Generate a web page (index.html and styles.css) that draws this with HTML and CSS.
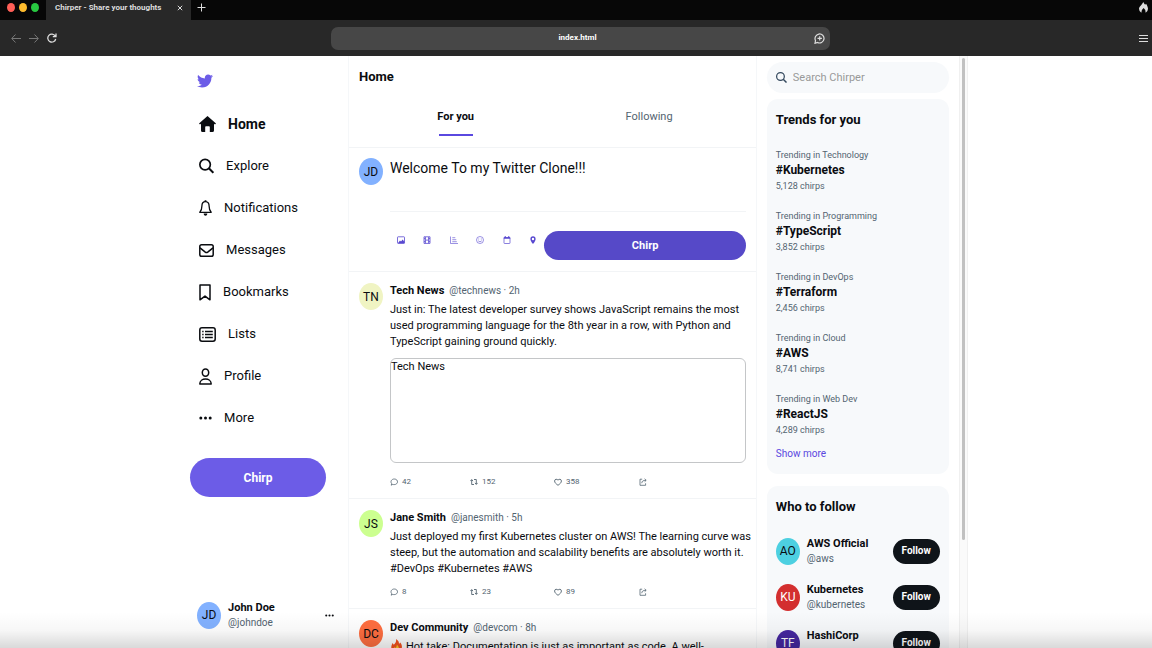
FILE: index.html
```html
<!DOCTYPE html>
<html lang="en">

<head>
  <meta charset="utf-8">
  <title>Chirper - Share your thoughts</title>
  <link rel="stylesheet" href="styles.css">
</head>

<body>

  <!-- icons -->
  <svg class="sprite" aria-hidden="true">
    <symbol id="i-bird" viewBox="0 0 512 512">
      <path fill="currentColor" d="M459.37 151.716c.325 4.548.325 9.097.325 13.645 0 138.72-105.583 298.558-298.558 298.558-59.452 0-114.68-17.219-161.137-47.106 8.447.974 16.568 1.299 25.34 1.299 49.055 0 94.213-16.568 130.274-44.832-46.132-.975-84.792-31.188-98.112-72.772 6.498.974 12.995 1.624 19.818 1.624 9.421 0 18.843-1.3 27.614-3.573-48.081-9.747-84.143-51.98-84.143-102.985v-1.299c13.969 7.797 30.214 12.67 47.431 13.319-28.264-18.843-46.781-51.005-46.781-87.391 0-19.492 5.197-37.36 14.294-52.954 51.655 63.675 129.3 105.258 216.365 109.807-1.624-7.797-2.599-15.918-2.599-24.04 0-57.828 46.782-104.934 104.934-104.934 30.213 0 57.502 12.67 76.67 33.137 23.715-4.548 46.456-13.32 66.599-25.34-7.798 24.366-24.366 44.833-46.132 57.827 21.117-2.273 41.584-8.122 60.426-16.243-14.292 20.791-32.161 39.308-52.628 54.253z" />
    </symbol>
    <symbol id="i-home" viewBox="0 0 17 16">
      <path fill="currentColor" d="M8.5 0 17 7.4l-1 1.2-1-.8V14.400q0 1.600-1.600 1.600H10.800V11q0-.8-.8-.8H7q-.8 0-.8.8v5H3.600Q2 16 2 14.400V7.800l-1 .8-1-1.200Z" />
    </symbol>
    <symbol id="i-search" viewBox="0 0 16 16">
      <circle cx="6.500" cy="6.500" r="5.600" fill="none" stroke="currentColor" stroke-width="1.800" />
      <path d="m10.500 10.500 4.800 4.800" stroke="currentColor" stroke-width="2.200" />
    </symbol>
    <symbol id="i-bell" viewBox="0 0 13 16">
      <path fill="none" stroke="currentColor" stroke-width="1.300" stroke-linejoin="round" d="M6.500 1.600C3.900 1.600 2.900 3.600 2.900 6c0 3-.7 5-2.100 6.300h11.400C10.800 11 10.100 9 10.100 6c0-2.400-1-4.400-3.600-4.400Z" />
      <path fill="currentColor" d="M5.600.3h1.800v1.600H5.600ZM4.700 13.600h3.600c0 3-3.600 3-3.600 0Z" />
    </symbol>
    <symbol id="i-mail" viewBox="0 0 15 13">
      <rect x=".8" y=".8" width="13.400" height="11.400" rx="1.800" fill="none" stroke="currentColor" stroke-width="1.500" />
      <path d="m1 3.800 5.300 4.300q1.200.9 2.400 0L14 3.800" fill="none" stroke="currentColor" stroke-width="1.500" />
    </symbol>
    <symbol id="i-mark" viewBox="0 0 12 17">
      <path d="M1 1h10v14.800l-5-3.700-5 3.700Z" fill="none" stroke="currentColor" stroke-width="1.500" stroke-linejoin="round" />
    </symbol>
    <symbol id="i-list" viewBox="0 0 17 15">
      <rect x=".8" y=".8" width="15.400" height="13.400" rx="2.200" fill="none" stroke="currentColor" stroke-width="1.500" />
      <path d="M3.200 4.500h1.400M3.200 7.500h1.400M3.200 10.500h1.400M6 4.500h7.800M6 7.500h7.800M6 10.500h7.800" stroke="currentColor" stroke-width="1.400" />
    </symbol>
    <symbol id="i-user" viewBox="0 0 13 17">
      <ellipse cx="6.500" cy="4.600" rx="3.200" ry="3.700" fill="none" stroke="currentColor" stroke-width="1.500" />
      <path d="M.8 16c0-6.600 11.400-6.600 11.400 0Z" fill="none" stroke="currentColor" stroke-width="1.500" stroke-linejoin="round" />
    </symbol>
    <symbol id="i-dots" viewBox="0 0 13 4">
      <circle cx="1.800" cy="2" r="1.500" fill="currentColor" />
      <circle cx="6.500" cy="2" r="1.500" fill="currentColor" />
      <circle cx="11.200" cy="2" r="1.500" fill="currentColor" />
    </symbol>
    <symbol id="i-image" viewBox="0 0 10 10">
      <rect x="1.500" y="1.800" width="7" height="6.600" rx=".6" fill="none" stroke="currentColor" stroke-width=".8" />
      <path fill="currentColor" d="m2 8 2-2.400 1 .8L6.700 4.500 8.500 7v1.300H2Z" />
    </symbol>
    <symbol id="i-film" viewBox="0 0 10 10">
      <path d="M2 1.800h6v6.600H2ZM3.400 2v6.200M6.600 2v6.200M3.400 5.100h3.200M2 3.600h1.400M2 6.600h1.400M6.600 3.600H8M6.600 6.600H8" fill="none" stroke="currentColor" stroke-width=".8" />
    </symbol>
    <symbol id="i-poll" viewBox="0 0 10 10">
      <path d="M1.500 1.500v7H9M3.300 2.700h3M3.300 4.700h4M3.300 6.700h4.500" fill="none" stroke="currentColor" stroke-width=".6" />
    </symbol>
    <symbol id="i-smile" viewBox="0 0 10 10">
      <circle cx="5" cy="5" r="3.500" fill="none" stroke="currentColor" stroke-width=".6" />
      <path d="M3.200 5.800q1.800 2 3.600 0M3.700 3.500v1M6.300 3.500v1" fill="none" stroke="currentColor" stroke-width=".6" />
    </symbol>
    <symbol id="i-cal" viewBox="0 0 10 10">
      <rect x="2" y="2.500" width="6" height="6" rx=".6" fill="none" stroke="currentColor" stroke-width=".7" />
      <path d="M1.800 3h6.400M3.300 1.300V3M6.700 1.300V3" stroke="currentColor" stroke-width="1.300" />
    </symbol>
    <symbol id="i-pin" viewBox="0 0 10 10">
      <path fill="currentColor" fill-rule="evenodd" d="M5 9C3 6.600 2.400 5 2.400 3.900a2.600 2.700 0 0 1 5.200 0C7.600 5 7 6.600 5 9ZM5 5.200a1.200 1.200 0 1 0 0-2.400 1.200 1.200 0 0 0 0 2.400Z" />
    </symbol>
    <symbol id="i-reply" viewBox="0 0 8 8">
      <path d="M1.200 7.200 1.700 5.700C0 3.600 1.600 1 4.200 1S7.500 2.700 7.500 3.900 6.400 6.600 4.200 6.600q-.9 0-1.400-.2Z" fill="none" stroke="currentColor" stroke-width=".8" />
    </symbol>
    <symbol id="i-repeat" viewBox="0 0 8 8">
      <path d="M4 6.500H1.700V1.800M.4 3.100l1.300-1.500L3 3.100M4 1.500h2.300v4.700M5 4.900l1.300 1.500 1.300-1.500" fill="none" stroke="currentColor" stroke-width=".9" />
    </symbol>
    <symbol id="i-heart" viewBox="0 0 8 8">
      <path d="M4 7.300C2.200 6 .6 4.700.6 3 .6 1 3 .6 4 2.200 5 .6 7.400 1 7.400 3 7.400 4.700 5.800 6 4 7.300Z" fill="none" stroke="currentColor" stroke-width=".9" />
    </symbol>
    <symbol id="i-share" viewBox="0 0 8 8">
      <path d="M3.200 1.200H1V7.300h5.600V5.300M2.800 5.200c0-2 1.200-2.900 4.200-2.900M5.600.8l1.600 1.500-1.600 1.500" fill="none" stroke="currentColor" stroke-width=".8" />
    </symbol>
    <symbol id="i-flame" viewBox="0 0 10 12">
      <path fill="currentColor" d="M4.800 0q.8 1.700 2 3l1-1.200C9.200 3.800 10 5.900 10 7.500q0 2.800-2.600 4.200.8-2.800-2.300-5.200-3 2.400-2.500 5.200Q0 10.500 0 7.500C0 5 3.200 3.500 4.800 0Z" />
    </symbol>
  </svg>

  <div class="tab-bar">
    <div class="lights">
      <span class="light red"></span>
      <span class="light yellow"></span>
      <span class="light green"></span>
    </div>
    <div class="tab">
      <span>Chirper - Share your thoughts</span>
      <button class="plain" aria-label="Close tab">
        <svg width="6" height="6" viewBox="0 0 6 6"><path d="m.8.8 4.400 4.400M5.200.8.8 5.200" stroke="currentColor" /></svg>
      </button>
    </div>
    <button class="plain new-tab" aria-label="New tab">
      <svg width="9" height="9" viewBox="0 0 9 9"><path d="M4.500.5v8M.5 4.500h8" stroke="currentColor" /></svg>
    </button>
    <svg class="flame" width="9" height="11"><use href="#i-flame" /></svg>
  </div>

  <div class="toolbar">
    <div class="arrows">
      <button class="plain dim" aria-label="Back">
        <svg width="10" height="9" viewBox="0 0 10 9"><path d="M4.500.5.700 4.500l3.800 4M1 4.500h9" fill="none" stroke="currentColor" /></svg>
      </button>
      <button class="plain dim" aria-label="Forward">
        <svg width="10" height="9" viewBox="0 0 10 9"><path d="m5.500.5 3.800 4-3.800 4M0 4.500h9" fill="none" stroke="currentColor" /></svg>
      </button>
      <button class="plain" aria-label="Reload">
        <svg width="10" height="10" viewBox="0 0 10 10"><path d="M8.200 3A4 4 0 1 0 8.700 6M9 .5v3.200H5.800" fill="none" stroke="currentColor" stroke-width="1.300" /></svg>
      </button>
    </div>
    <div class="address">
      <input type="text" value="index.html" aria-label="Address">
      <svg class="address-icon" width="11" height="11" viewBox="0 0 11 11"><path d="M1 10.300 1.500 7.500a4.500 4.500 0 1 1 2 2ZM5.700 3.200v4.400M3.500 5.400h4.400" fill="none" stroke="currentColor" stroke-width="1.200" /></svg>
    </div>
    <button class="plain menu" aria-label="Menu">
      <svg width="9" height="9" viewBox="0 0 9 9"><path d="M0 1.500h9M0 4.500h9M0 7.500h9" stroke="currentColor" /></svg>
    </button>
  </div>

  <div class="page">

    <nav class="sidebar">
      <a class="logo" href="#" aria-label="Chirper"><svg width="16" height="18"><use href="#i-bird" /></svg></a>
      <a class="nav-link active" href="#"><svg width="17" height="16"><use href="#i-home" /></svg>Home</a>
      <a class="nav-link" href="#"><svg width="15" height="16"><use href="#i-search" /></svg>Explore</a>
      <a class="nav-link" href="#"><svg width="13" height="16"><use href="#i-bell" /></svg>Notifications</a>
      <a class="nav-link" href="#"><svg width="15" height="13"><use href="#i-mail" /></svg>Messages</a>
      <a class="nav-link" href="#"><svg width="12" height="17"><use href="#i-mark" /></svg>Bookmarks</a>
      <a class="nav-link" href="#"><svg width="17" height="15"><use href="#i-list" /></svg>Lists</a>
      <a class="nav-link" href="#"><svg width="13" height="17"><use href="#i-user" /></svg>Profile</a>
      <a class="nav-link" href="#"><svg width="13" height="4"><use href="#i-dots" /></svg>More</a>
      <button class="chirp-btn">Chirp</button>
      <div class="account">
        <span class="avatar blue">JD</span>
        <div class="who">
          <strong>John Doe</strong>
          <span>@johndoe</span>
        </div>
        <svg width="9" height="3"><use href="#i-dots" /></svg>
      </div>
    </nav>

    <main class="feed">
      <h1>Home</h1>
      <div class="tabs">
        <a class="active" href="#">For you</a>
        <a href="#">Following</a>
      </div>

      <form class="composer">
        <span class="avatar blue">JD</span>
        <div class="body">
          <textarea aria-label="Chirp text">Welcome To my Twitter Clone!!!</textarea>
          <div class="composer-row">
            <div class="tools">
              <button type="button" class="plain" aria-label="Image"><svg width="10" height="10"><use href="#i-image" /></svg></button>
              <button type="button" class="plain" aria-label="Video"><svg width="10" height="10"><use href="#i-film" /></svg></button>
              <button type="button" class="plain" aria-label="Poll"><svg width="10" height="10"><use href="#i-poll" /></svg></button>
              <button type="button" class="plain" aria-label="Emoji"><svg width="10" height="10"><use href="#i-smile" /></svg></button>
              <button type="button" class="plain" aria-label="Schedule"><svg width="10" height="10"><use href="#i-cal" /></svg></button>
              <button type="button" class="plain" aria-label="Location"><svg width="10" height="10"><use href="#i-pin" /></svg></button>
            </div>
            <button type="button" class="send-btn">Chirp</button>
          </div>
        </div>
      </form>

      <article class="chirp">
        <span class="avatar cream">TN</span>
        <div class="body">
          <div class="meta"><strong>Tech News</strong><span>@technews · 2h</span></div>
          <p>Just in: The latest developer survey shows JavaScript remains the most used programming language for the 8th year in a row, with Python and TypeScript gaining ground quickly.</p>
          <div class="media">Tech News</div>
          <div class="actions">
            <button class="plain"><svg width="8" height="8"><use href="#i-reply" /></svg>42</button>
            <button class="plain"><svg width="8" height="8"><use href="#i-repeat" /></svg>152</button>
            <button class="plain"><svg width="8" height="8"><use href="#i-heart" /></svg>358</button>
            <button class="plain" aria-label="Share"><svg width="8" height="8"><use href="#i-share" /></svg></button>
          </div>
        </div>
      </article>

      <article class="chirp">
        <span class="avatar lime">JS</span>
        <div class="body">
          <div class="meta"><strong>Jane Smith</strong><span>@janesmith · 5h</span></div>
          <p>Just deployed my first Kubernetes cluster on AWS! The learning curve was steep, but the automation and scalability benefits are absolutely worth it. #DevOps #Kubernetes #AWS</p>
          <div class="actions">
            <button class="plain"><svg width="8" height="8"><use href="#i-reply" /></svg>8</button>
            <button class="plain"><svg width="8" height="8"><use href="#i-repeat" /></svg>23</button>
            <button class="plain"><svg width="8" height="8"><use href="#i-heart" /></svg>89</button>
            <button class="plain" aria-label="Share"><svg width="8" height="8"><use href="#i-share" /></svg></button>
          </div>
        </div>
      </article>

      <article class="chirp">
        <span class="avatar orange">DC</span>
        <div class="body">
          <div class="meta"><strong>Dev Community</strong><span>@devcom · 8h</span></div>
          <p><svg class="fire" width="13" height="13" viewBox="0 0 13 13"><path fill="#f4511e" d="M6 0c2.500 1.500 3 3 3 5l1.200-1.500C12 5.500 12.300 8 11.500 10c-1 2.200-2.800 3-5 3s-4.300-1-5-3.200C.8 7.300 2 5.500 2.500 4l1.300 1.800C5.500 4 6.500 2.500 6 0Z" /><path fill="#ffca28" d="M6.800 5.500c2 2.300 2.800 4 2 5.500-.8 1.800-4 1.800-4.800 0-.6-1.300 0-2.300.5-3l.9 1C6.300 8 7 7 6.800 5.500Z" /></svg>Hot take: Documentation is just as important as code. A well-</p>
        </div>
      </article>
    </main>

    <aside class="side">
      <label class="search">
        <svg width="11" height="11"><use href="#i-search" /></svg>
        <input type="search" placeholder="Search Chirper" aria-label="Search Chirper">
      </label>

      <section class="card">
        <h2>Trends for you</h2>
        <div class="trend"><span>Trending in Technology</span><strong>#Kubernetes</strong><span>5,128 chirps</span></div>
        <div class="trend"><span>Trending in Programming</span><strong>#TypeScript</strong><span>3,852 chirps</span></div>
        <div class="trend"><span>Trending in DevOps</span><strong>#Terraform</strong><span>2,456 chirps</span></div>
        <div class="trend"><span>Trending in Cloud</span><strong>#AWS</strong><span>8,741 chirps</span></div>
        <div class="trend"><span>Trending in Web Dev</span><strong>#ReactJS</strong><span>4,289 chirps</span></div>
        <a class="more" href="#">Show more</a>
      </section>

      <section class="card">
        <h2>Who to follow</h2>
        <div class="follow">
          <span class="avatar cyan">AO</span>
          <div class="who"><strong>AWS Official</strong><span>@aws</span></div>
          <button class="follow-btn">Follow</button>
        </div>
        <div class="follow">
          <span class="avatar crimson">KU</span>
          <div class="who"><strong>Kubernetes</strong><span>@kubernetes</span></div>
          <button class="follow-btn">Follow</button>
        </div>
        <div class="follow">
          <span class="avatar purple">TF</span>
          <div class="who"><strong>HashiCorp</strong></div>
          <button class="follow-btn">Follow</button>
        </div>
      </section>
    </aside>

    <div class="scroll-track"><div class="scroll-thumb"></div></div>
  </div>

</body>

</html>
```

FILE: styles.css
```css
* {
  box-sizing: border-box;
}

body {
  display: flex;
  flex-direction: column;
  height: 100vh;
  margin: 0;
  overflow: hidden;
  background-color: #fff;
  color: #0a0c10;
  font-family: Roboto, "Liberation Sans", sans-serif;
  font-size: 11px;
  line-height: 16px;
}

h1,
h2,
p {
  margin: 0;
}

a {
  color: inherit;
  text-decoration: none;
}

button,
input,
textarea {
  font: inherit;
  color: inherit;
  border: 0;
  padding: 0;
}

svg {
  display: block;
  flex: none;
}

.sprite {
  position: absolute;
  width: 0;
  height: 0;
}

.plain {
  display: flex;
  align-items: center;
  background: none;
}

/* browser window */
.tab-bar {
  display: flex;
  flex: none;
  height: 20px;
  background-color: #070707;
  color: #ddd;
  font-size: 8px;
  font-weight: bold;
  line-height: 16px;
}

.lights {
  display: flex;
  gap: 4px;
  width: 46px;
  padding: 3px 7px;
}

.light {
  width: 8px;
  height: 9px;
  border-radius: 50%;
}

.red {
  background-color: #ff5f57;
}

.yellow {
  background-color: #febc2e;
}

.green {
  background-color: #28c840;
}

.tab {
  display: flex;
  justify-content: space-between;
  width: 145px;
  padding: 0 8px 4px 9px;
  background-color: #282828;
}

.new-tab {
  padding: 0 0 5px 6px;
}

.flame {
  margin: 2px 4px 0 auto;
}

.toolbar {
  display: grid;
  grid-template-columns: 1fr 499px 1fr;
  align-items: center;
  flex: none;
  height: 36px;
  background-color: #282828;
  color: #ddd;
}

.arrows {
  display: flex;
  gap: 8px;
  padding-left: 11px;
}

.dim {
  color: #777;
}

.address {
  display: flex;
  align-items: center;
  height: 23px;
  margin-left: 4px;
  margin-right: -4px;
  padding: 0 5px 0 11px;
  border-radius: 7px;
  background-color: #474747;
}

.address input {
  flex: 1;
  min-width: 0;
  background: none;
  color: #fff;
  font-size: 8px;
  font-weight: bold;
  text-align: center;
}

.menu {
  justify-self: end;
  padding-right: 4px;
}

/* page */
.page {
  position: relative;
  display: grid;
  grid-template-columns: 159fr 408fr 202fr 9px;
  grid-template-rows: 100%;
  flex: 1;
  min-height: 0;
  padding: 0 16% 0 16.5%;
  overflow: hidden;
}

.page::after {
  content: "";
  position: absolute;
  inset: auto 0 0;
  height: 36px;
  background: linear-gradient(rgba(0, 0, 0, 0), rgba(0, 0, 0, 0.03) 50%, rgba(0, 0, 0, 0.15));
  pointer-events: none;
}

.avatar {
  display: flex;
  align-items: center;
  justify-content: center;
  flex: none;
  width: 24px;
  height: 27px;
  border-radius: 50%;
  font-size: 12px;
}

.blue {
  background-color: #82b1ff;
}

.cream {
  background-color: #f0f4c3;
}

.lime {
  background-color: #ccff90;
}

.orange {
  background-color: #ff6e40;
}

.cyan {
  background-color: #4dd0e1;
}

.crimson {
  background-color: #d32f2f;
  color: #fff;
}

.purple {
  background-color: #4527a0;
  color: #fff;
}

.sidebar {
  display: flex;
  flex-direction: column;
  border-right: 1px solid #f5f7f9;
}

.logo {
  padding: 16px 0 13px 7px;
  color: #6c5ce7;
}

.nav-link {
  display: flex;
  align-items: center;
  gap: 12px;
  height: 42px;
  padding-left: 9px;
  font-size: 13px;
}

.nav-link.active {
  font-size: 14px;
  font-weight: bold;
}

.chirp-btn {
  height: 39px;
  margin: 19px 22px 0 0;
  border-radius: 20px;
  background-color: #6c5ce7;
  color: #fff;
  font-size: 12px;
  font-weight: bold;
}

.account {
  display: flex;
  align-items: center;
  gap: 7px;
  margin-top: auto;
  padding: 0 14px 18px 7px;
}

.who {
  display: flex;
  flex: 1;
  flex-direction: column;
  min-width: 0;
  height: 30px;
  line-height: 15px;
}

.who span,
.meta span {
  color: #536471;
  font-size: 10px;
}

.feed {
  border-right: 1px solid #f5f7f9;
}

h1 {
  padding: 11px 10px;
  font-size: 13px;
  line-height: 20px;
}

.tabs {
  display: flex;
  height: 50px;
  padding: 0 10px;
  border-bottom: 1px solid #f2f4f6;
}

.tabs a {
  display: flex;
  flex: 1;
  flex-direction: column;
  align-items: center;
  gap: 9px;
  padding-top: 11px;
  color: #536471;
}

.tabs .active {
  color: #0a0c10;
  font-weight: bold;
}

.tabs .active::after {
  content: "";
  width: 34px;
  height: 2px;
  background-color: #5a48e0;
}

.composer,
.chirp {
  display: flex;
  gap: 7px;
  padding: 10px 10px 11px;
  border-bottom: 1px solid #f2f4f6;
}

.chirp {
  padding: 11px 10px 10px;
}

.body {
  flex: 1;
  min-width: 0;
}

textarea {
  display: block;
  width: 100%;
  height: 54px;
  border-bottom: 1px solid #f2f4f6;
  background: none;
  font-size: 14px;
  line-height: 20px;
  resize: none;
}

.composer-row {
  display: grid;
  grid-template-columns: 155fr 202fr;
  margin-top: 19px;
}

.tools {
  display: flex;
  align-items: flex-start;
  justify-content: space-between;
  padding: 4px 6px;
  color: #5848d0;
}

.send-btn {
  height: 29px;
  border-radius: 15px;
  background-color: #5649c8;
  color: #fff;
  font-weight: bold;
}

.meta {
  display: flex;
  gap: 5px;
  margin-bottom: 3px;
}

/* text may run slightly into the gutter */
.chirp p {
  margin-right: -8px;
}

.media {
  height: 105px;
  margin: 8px 0 13px;
  border: 1px solid #c4c6c8;
  border-radius: 6px;
}

.actions {
  display: grid;
  grid-template-columns: 80fr 84fr 85fr 107fr;
  margin-top: 9px;
  color: #536471;
  font-size: 8px;
  line-height: 12px;
}

.actions .plain {
  gap: 4px;
  height: 12px;
}

.fire {
  display: inline-block;
  margin-right: 3px;
  vertical-align: -2px;
}

.side {
  padding: 6px 10px 0;
}

.search {
  display: flex;
  align-items: center;
  gap: 6px;
  height: 31px;
  padding: 0 9px;
  border-radius: 16px;
  background-color: #f7f9fb;
  color: #34495e;
}

.search input {
  flex: 1;
  min-width: 0;
  background: none;
}

.search input::placeholder {
  color: #999;
}

.card {
  margin: 6px 0 12px;
  padding: 11px 9px 12px;
  border-radius: 11px;
  background-color: #f7f9fb;
}

h2 {
  padding-bottom: 3px;
  font-size: 13px;
  line-height: 20px;
}

.trend {
  display: flex;
  flex-direction: column;
  margin-top: 14px;
  color: #536471;
  font-size: 9px;
}

.trend strong {
  color: #0a0c10;
  font-size: 12px;
  line-height: 15px;
}

.more {
  display: block;
  margin-top: 8px;
  color: #5a48e0;
  font-size: 10px;
}

.follow {
  display: flex;
  align-items: center;
  gap: 7px;
  margin-top: 16px;
}

.follow-btn {
  width: 47px;
  height: 25px;
  border-radius: 13px;
  background-color: #0f1419;
  color: #fff;
  font-size: 10px;
  font-weight: bold;
}

.scroll-track {
  padding: 2px;
  border: 1px solid #f0f0f0;
  border-width: 0 1px;
  background-color: #fafafa;
}

.scroll-thumb {
  height: 82%;
  border-radius: 3px;
  background-color: #c1c1c1;
}
```
